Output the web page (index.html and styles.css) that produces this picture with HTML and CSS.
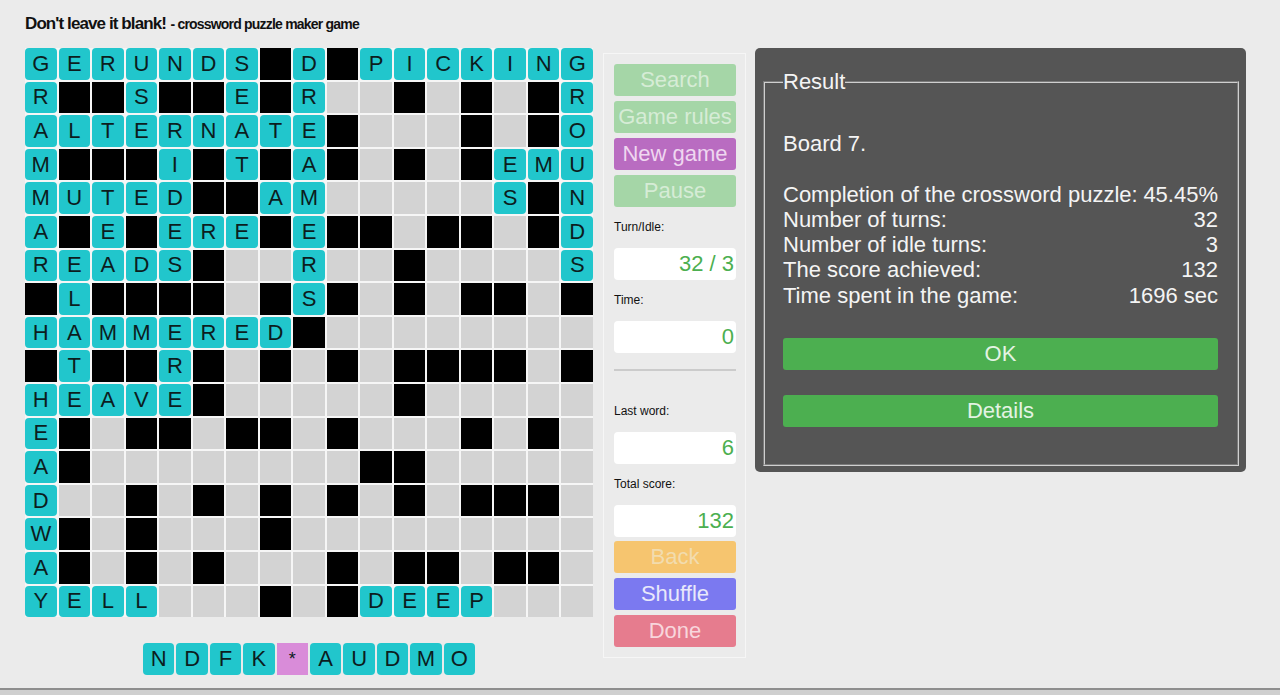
FILE: index.html
```html
<!DOCTYPE html>
<html lang="en">
<head>
    <meta charset="UTF-8">
    <meta name="viewport" content="width=device-width, initial-scale=1.0">
    <title>Don't leave it blank!</title>
    <link rel="stylesheet" href="styles.css">
</head>
<body>
    <div class="header">
        <span class="title">Don't leave it blank!</span>
        <span class="subtitle">- crossword puzzle maker game</span>
    </div>

    <div class="game">
        <div class="board-col">
            <div class="board" id="board"></div>
            <div class="rack" id="rack"></div>
        </div>

        <div class="controls">
            <button class="btn btn-green" disabled>Search</button>
            <button class="btn btn-green" disabled>Game rules</button>
            <button class="btn btn-purple">New game</button>
            <button class="btn btn-green" disabled>Pause</button>

            <div class="label">Turn/Idle:</div>
            <div class="field">32 / 3</div>
            <div class="label">Time:</div>
            <div class="field">0</div>

            <div class="divider"></div>

            <div class="label label-gap">Last word:</div>
            <div class="field">6</div>
            <div class="label">Total score:</div>
            <div class="field field-last">132</div>

            <button class="btn btn-orange" disabled>Back</button>
            <button class="btn btn-blue">Shuffle</button>
            <button class="btn btn-red">Done</button>
        </div>

        <div class="result">
            <fieldset>
                <legend>Result</legend>
                <div class="result-body">
                    <div class="board-no">Board 7.</div>
                    <div class="stat"><span>Completion of the crossword puzzle:</span><span>45.45%</span></div>
                    <div class="stat"><span>Number of turns:</span><span>32</span></div>
                    <div class="stat"><span>Number of idle turns:</span><span>3</span></div>
                    <div class="stat"><span>The score achieved:</span><span>132</span></div>
                    <div class="stat"><span>Time spent in the game:</span><span>1696 sec</span></div>
                </div>
                <button class="btn-ok">OK</button>
                <button class="btn-ok">Details</button>
            </fieldset>
        </div>
    </div>

    <script>
        // # = blocked square, . = empty square, letters = placed tiles
        const rows = [
            'GERUNDS#D#PICKING',
            'R##S##E#R..#.#.#R',
            'ALTERNATE#...#.#O',
            'M###I#T#A#.#.#EMU',
            'MUTED##AM.....S#N',
            'A#E#ERE#E##.##.#D',
            'READS#..R..#....S',
            '#L####.#S#.#.##.#',
            'HAMMERED#........',
            '#T##R#.#.#.####.#',
            'HEAVE#.....#.....',
            'E#.##.##.#...#.#.',
            'A#........##.....',
            'D..#.#.#.#.#.###.',
            'W#.#...#.........',
            'A#.#.#...#.##.##.',
            'YELL...#.#DEEP...'
        ];
        const rack = ['N', 'D', 'F', 'K', '*', 'A', 'U', 'D', 'M', 'O'];

        const board = document.getElementById('board');
        rows.forEach(row => {
            for (const ch of row) {
                const cell = document.createElement('div');
                if (ch === '#') {
                    cell.className = 'cell blocked';
                } else if (ch === '.') {
                    cell.className = 'cell empty';
                } else {
                    cell.className = 'cell tile';
                    cell.textContent = ch;
                }
                board.appendChild(cell);
            }
        });

        const rackEl = document.getElementById('rack');
        rack.forEach(ch => {
            const tile = document.createElement('div');
            tile.className = ch === '*' ? 'tile rack-tile joker' : 'tile rack-tile';
            tile.textContent = ch;
            rackEl.appendChild(tile);
        });
    </script>
</body>
</html>
```

FILE: styles.css
```css
* {
    margin: 0;
    padding: 0;
    box-sizing: border-box;
    font-family: 'Liberation Sans', Arial, sans-serif;
}

html {
    background: #cfcfcf;
}

body {
    background: #ebebeb;
    height: 690px;
    border-bottom: 2px solid #8e8e8e;
    color: #111;
}

.header {
    padding: 14px 25px 0;
    height: 34px;
    line-height: 20px;
    font-weight: bold;
}

.title {
    font-size: 17px;
    letter-spacing: -0.9px;
}

.subtitle {
    font-size: 14px;
    letter-spacing: -0.8px;
}

.game {
    display: flex;
    align-items: flex-start;
    padding: 14px 0 0 25px;
}

/* board */

.board-col {
    width: 568px;
}

.board {
    display: grid;
    grid-template-columns: repeat(17, 1fr);
    grid-auto-rows: 31.6px;
    gap: 2px;
    background: #f6f6f6;
}

.cell {
    display: flex;
    align-items: center;
    justify-content: center;
}

.blocked {
    background: #000;
}

.empty {
    background: #d3d3d3;
}

.tile {
    background: #21c6cc;
    border-radius: 4px;
    color: #0c1d1e;
    font-size: 22px;
}

.rack {
    display: flex;
    justify-content: center;
    gap: 2px;
    margin-top: 26px;
}

.rack-tile {
    width: 31.4px;
    height: 32px;
    display: flex;
    align-items: center;
    justify-content: center;
}

.joker {
    background: #d98cd9;
    border-radius: 0;
    font-size: 18px;
}

/* side controls */

.controls {
    width: 143px;
    margin: 5px 0 0 10px;
    padding: 10px 9px 10px 10px;
    border: 1px solid #f6f6f6;
    display: flex;
    flex-direction: column;
}

.btn {
    height: 32px;
    border: none;
    border-radius: 3px;
    font-size: 22px;
    line-height: 32px;
    margin-bottom: 5px;
    cursor: pointer;
}

.btn:last-child {
    margin-bottom: 0;
}

.btn-green {
    background: #a5d6a7;
    color: #d6ecd6;
}

.btn-purple {
    background: #b96cc1;
    color: #efd7f0;
}

.btn-orange {
    background: #f6c56f;
    color: #f2dcae;
}

.btn-blue {
    background: #7b79f0;
    color: #e8e8fb;
}

.btn-red {
    background: #e67c8e;
    color: #f8d6dc;
}

.label {
    font-size: 12px;
    line-height: 14px;
    margin: 8px 0 14px 0;
}

.btn + .label {
    margin-top: 8px;
}

.field + .label {
    margin-top: 13px;
}

.label-gap {
    margin-top: 33px;
}

.field {
    height: 32px;
    background: #fff;
    border-radius: 4px;
    color: #4caf50;
    font-size: 22px;
    line-height: 32px;
    text-align: right;
    padding-right: 2px;
}

.field-last {
    margin-bottom: 4px;
}

.divider {
    height: 2px;
    background: #cbcbcb;
    margin-top: 16px;
}

/* result dialog */

.result {
    width: 491px;
    margin-left: 9px;
    background: #555;
    border-radius: 5px;
    padding: 21px 7px 6px 8px;
    color: #f4f4f4;
}

fieldset {
    border: 2px groove #cfcfcf;
    padding: 0 19px 37px 18px;
    display: flex;
    flex-direction: column;
}

legend {
    font-size: 22px;
    padding: 0;
}

.result-body {
    font-size: 22px;
    line-height: 25.3px;
    padding-top: 36px;
}

.board-no {
    margin-bottom: 25.3px;
}

.stat {
    display: flex;
    justify-content: space-between;
}

.btn-ok {
    height: 32px;
    border: none;
    border-radius: 3px;
    background: #4caf50;
    color: #e3f3e3;
    font-size: 22px;
    margin-top: 30px;
    cursor: pointer;
}

.btn-ok + .btn-ok {
    margin-top: 25px;
}
```
